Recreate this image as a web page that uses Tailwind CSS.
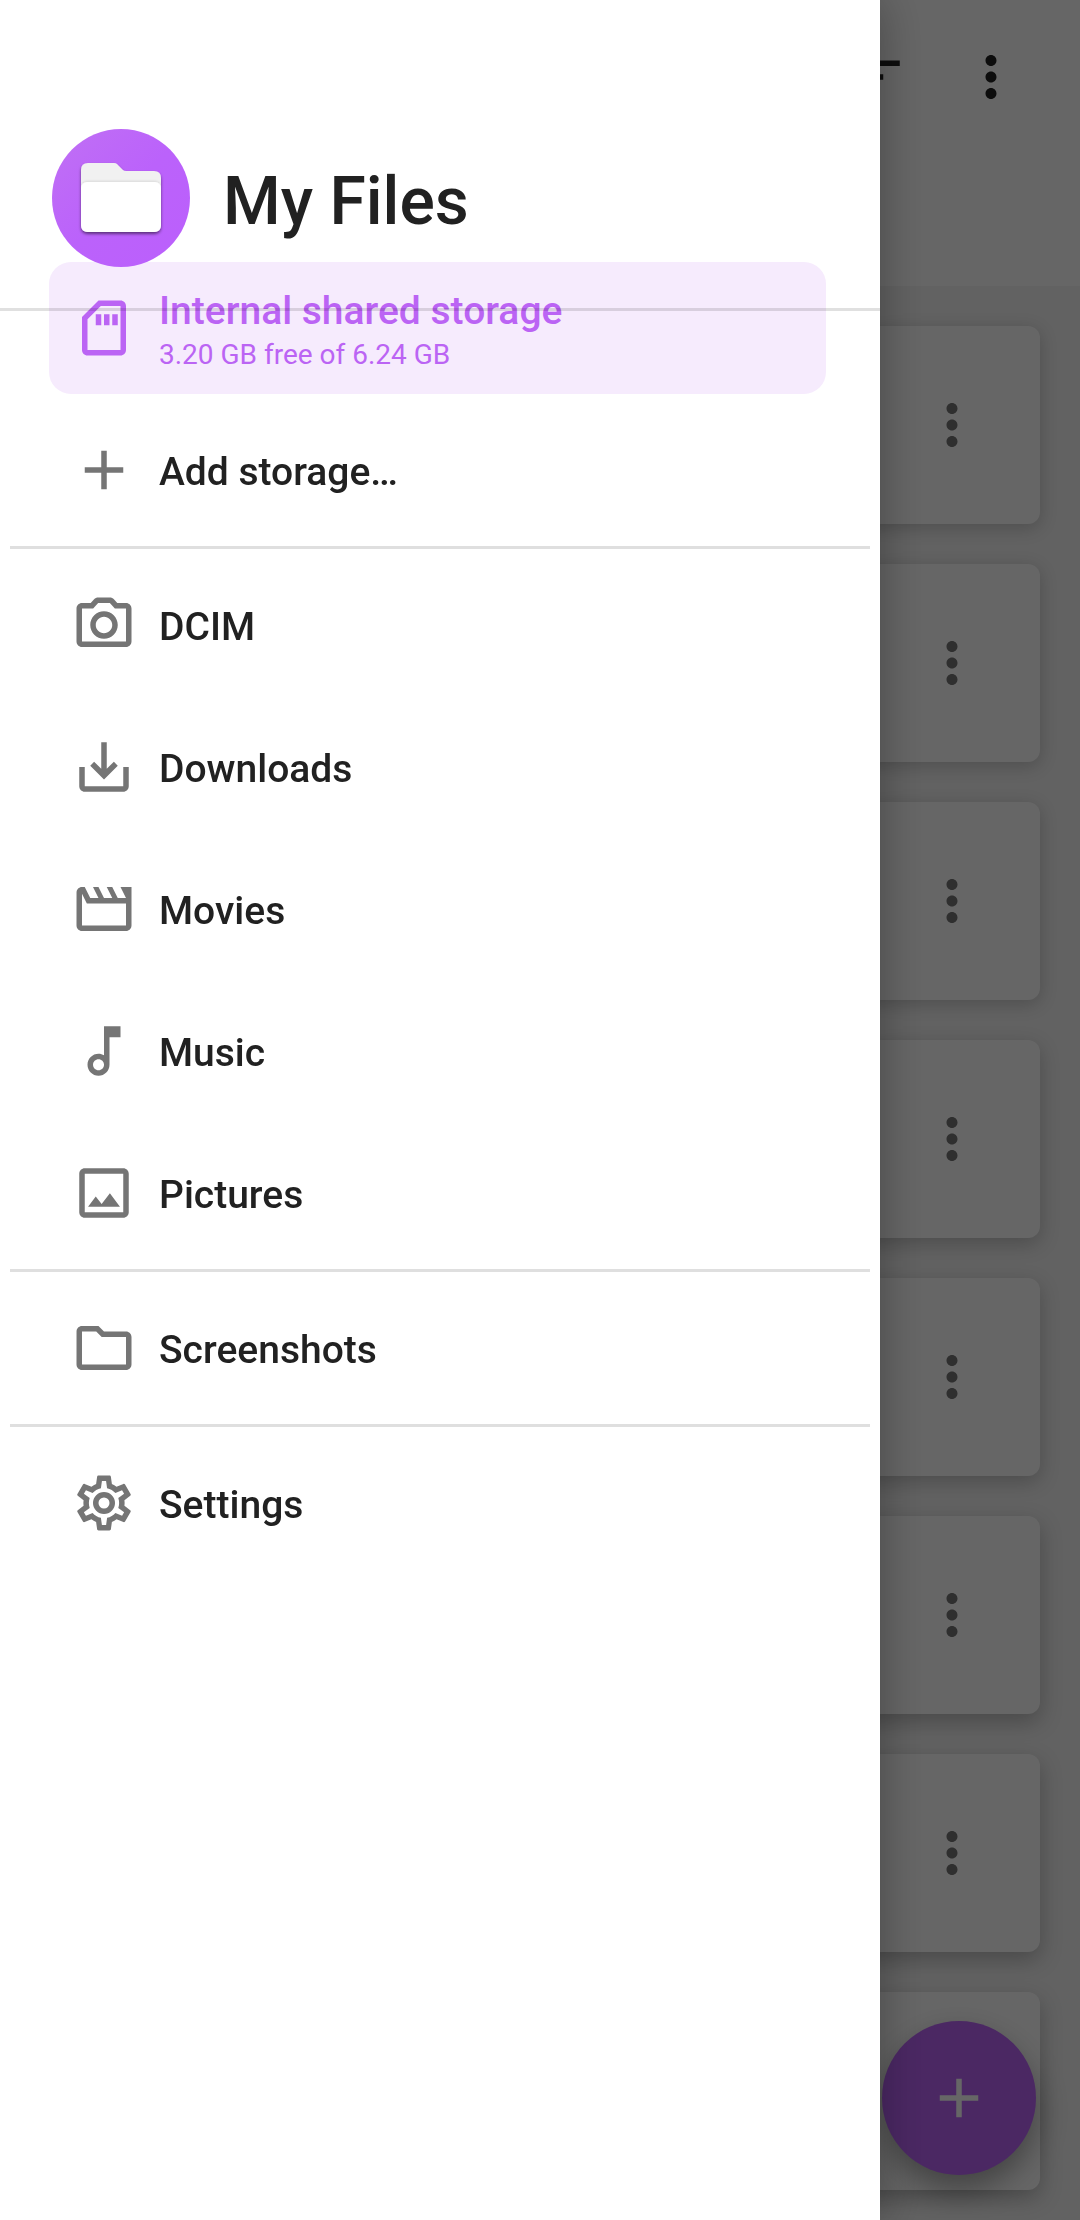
<!DOCTYPE html>
<html lang="en">
<head>
<meta charset="utf-8">
<meta name="viewport" content="width=device-width, initial-scale=1">
<title>My Files</title>
<script src="https://cdn.jsdelivr.net/npm/@tailwindcss/browser@4"></script>
</head>
<body class="min-h-screen overflow-x-hidden bg-[#f4f4f4] font-['Roboto',sans-serif] text-[#212121]">

<svg class="hidden" aria-hidden="true">
  <symbol id="more" viewBox="0 0 24 24"><path d="M12 8c1.1 0 2-.9 2-2s-.9-2-2-2-2 .9-2 2 .9 2 2 2zm0 2c-1.1 0-2 .9-2 2s.9 2 2 2 2-.9 2-2-.9-2-2-2zm0 6c-1.1 0-2 .9-2 2s.9 2 2 2 2-.9 2-2-.9-2-2-2z"/></symbol>
  <symbol id="plus" viewBox="0 0 24 24"><path d="M19 13h-6v6h-2v-6H5v-2h6V5h2v6h6v2z"/></symbol>
</svg>

<!-- File list behind the drawer -->
<header class="flex h-[286px] items-start justify-end gap-[50px] bg-white pt-11 pr-14">
  <button aria-label="Sort" class="size-[66px]"><svg viewBox="0 0 24 24" class="size-full fill-[#212121]"><path d="M3 18h6v-2H3v2zM3 6v2h18V6H3zm0 7h12v-2H3v2z"/></svg></button>
  <button aria-label="More options" class="size-[66px]"><svg class="size-full fill-[#212121]"><use href="#more"/></svg></button>
</header>
<main class="flex flex-col gap-10 px-10 pt-10 pb-[30px]">
  <article class="flex h-[198px] items-center justify-end rounded-xl bg-white pr-[55px] shadow-[0_4px_18px_rgb(0_0_0/0.2)]"><button aria-label="File options" class="size-[66px]"><svg class="size-full fill-[#757575]"><use href="#more"/></svg></button></article>
  <article class="flex h-[198px] items-center justify-end rounded-xl bg-white pr-[55px] shadow-[0_4px_18px_rgb(0_0_0/0.2)]"><button aria-label="File options" class="size-[66px]"><svg class="size-full fill-[#757575]"><use href="#more"/></svg></button></article>
  <article class="flex h-[198px] items-center justify-end rounded-xl bg-white pr-[55px] shadow-[0_4px_18px_rgb(0_0_0/0.2)]"><button aria-label="File options" class="size-[66px]"><svg class="size-full fill-[#757575]"><use href="#more"/></svg></button></article>
  <article class="flex h-[198px] items-center justify-end rounded-xl bg-white pr-[55px] shadow-[0_6px_20px_rgb(0_0_0/0.22)]"><button aria-label="File options" class="size-[66px]"><svg class="size-full fill-[#757575]"><use href="#more"/></svg></button></article>
  <article class="flex h-[198px] items-center justify-end rounded-xl bg-white pr-[55px] shadow-[0_6px_20px_rgb(0_0_0/0.22)]"><button aria-label="File options" class="size-[66px]"><svg class="size-full fill-[#757575]"><use href="#more"/></svg></button></article>
  <article class="flex h-[198px] items-center justify-end rounded-xl bg-white pr-[55px] shadow-[0_8px_22px_rgb(0_0_0/0.25)]"><button aria-label="File options" class="size-[66px]"><svg class="size-full fill-[#757575]"><use href="#more"/></svg></button></article>
  <article class="flex h-[198px] items-center justify-end rounded-xl bg-white pr-[55px] shadow-[0_8px_22px_rgb(0_0_0/0.25)]"><button aria-label="File options" class="size-[66px]"><svg class="size-full fill-[#757575]"><use href="#more"/></svg></button></article>
  <article class="flex h-[198px] items-center justify-end rounded-xl bg-white pr-[55px] shadow-[0_8px_22px_rgb(0_0_0/0.25)]"></article>
</main>
<button aria-label="Add" class="fixed right-11 bottom-[45px] flex size-[154px] items-center justify-center rounded-full bg-[#bb64f8] shadow-[0_14px_30px_rgb(0_0_0/0.35)]"><svg class="size-[66px] fill-white"><use href="#plus"/></svg></button>

<div class="fixed inset-0 bg-black/60"></div>

<!-- Navigation drawer -->
<aside class="fixed inset-y-0 left-0 w-[calc(100%-200px)] bg-white shadow-[0_0_44px_rgb(0_0_0/0.32)]">
  <div class="pointer-events-none relative z-10 flex h-[311px] items-start gap-[33px] border-b-3 border-black/12 pt-[129px] pl-[52px]">
    <svg viewBox="0 0 138 138" class="size-[138px] shrink-0" aria-hidden="true">
      <defs>
        <linearGradient id="disc" x1="0" y1="0" x2="1" y2="1"><stop offset="0" stop-color="#c070f4"/><stop offset=".5" stop-color="#bb62fb"/><stop offset="1" stop-color="#bb5ffc"/></linearGradient>
        <filter id="lift" x="-20%" y="-20%" width="140%" height="150%"><feDropShadow dx="0" dy="2" stdDeviation="1.6" flood-color="#000" flood-opacity=".5"/></filter>
        <filter id="edge" x="-10%" y="-20%" width="120%" height="140%"><feDropShadow dx="0" dy="-1" stdDeviation="1" flood-color="#000" flood-opacity=".1"/></filter>
        <clipPath id="folder"><path d="M36 34h26q2 0 3 1l6 6q1 1 3 1h28q7 0 7 7v47q0 7-7 7H36q-7 0-7-7V41q0-7 7-7z"/></clipPath>
      </defs>
      <circle cx="69" cy="69" r="69" fill="url(#disc)"/>
      <path d="M36 34h26q2 0 3 1l6 6q1 1 3 1h28q7 0 7 7v47q0 7-7 7H36q-7 0-7-7V41q0-7 7-7z" fill="#f1f1f1" filter="url(#lift)"/>
      <g clip-path="url(#folder)"><rect x="29" y="53" width="80" height="50" rx="6" fill="#fff" filter="url(#edge)"/></g>
    </svg>
    <h1 class="pt-[33px] text-[66px] leading-[80px] font-medium">My Files</h1>
  </div>

  <nav class="-mt-[54px] text-[39px] leading-[44px] font-medium">
    <ul>
      <li class="py-[5px] pr-[54px] pl-[49px]">
        <a href="#" aria-current="page" class="flex h-[132px] items-center gap-[22px] rounded-[22px] bg-[#f6ebfd] pl-[22px] text-[#bb64f4]">
          <svg viewBox="0 0 24 24" class="size-[66px] fill-current"><path d="M18 2h-8L4 8v12c0 1.1.9 2 2 2h12c1.1 0 2-.9 2-2V4c0-1.1-.9-2-2-2zm0 18H6V8.83L10.83 4H18v16zM9 7h2v4H9V7zm3 0h2v4h-2V7zm3 0h2v4h-2V7z"/></svg>
          <span class="flex flex-col pt-2.5"><span>Internal shared storage</span><span class="text-[28px] font-normal">3.20 GB free of 6.24 GB</span></span>
        </a>
      </li>
      <li class="py-[5px] pr-[54px] pl-[49px]">
        <a href="#" class="flex h-[132px] items-center gap-[22px] pl-[22px]">
          <svg class="size-[66px] fill-[#757575]"><use href="#plus"/></svg>
          <span class="pt-1">Add storage…</span>
        </a>
      </li>
    </ul>
    <hr class="mx-2.5 my-[5px] border-t-3 border-[#dfdfdf]">
    <ul>
      <li class="py-[5px] pr-[54px] pl-[49px]">
        <a href="#" class="flex h-[132px] items-center gap-[22px] pl-[22px]">
          <svg viewBox="0 0 24 24" class="size-[66px] fill-[#757575]"><path d="M20 4h-3.17L15.6 2.65C15.22 2.24 14.68 2 14.12 2H9.88c-.56 0-1.1.24-1.48.65L7.17 4H4c-1.1 0-2 .9-2 2v12c0 1.1.9 2 2 2h16c1.1 0 2-.9 2-2V6c0-1.1-.9-2-2-2zm0 14H4V6h4.05l1.83-2h4.24l1.83 2H20v12zM12 7c-2.76 0-5 2.24-5 5s2.24 5 5 5 5-2.24 5-5-2.24-5-5-5zm0 8c-1.65 0-3-1.35-3-3s1.35-3 3-3 3 1.35 3 3-1.35 3-3 3z"/></svg>
          <span class="pt-1">DCIM</span>
        </a>
      </li>
      <li class="py-[5px] pr-[54px] pl-[49px]">
        <a href="#" class="flex h-[132px] items-center gap-[22px] pl-[22px]">
          <svg viewBox="0 0 24 24" class="size-[66px] fill-[#757575]"><path d="M19 12v7H5v-7H3v7c0 1.1.9 2 2 2h14c1.1 0 2-.9 2-2v-7h-2zm-6 .67l2.59-2.58L17 11.5l-5 5-5-5 1.41-1.41L11 12.67V3h2v9.67z"/></svg>
          <span class="pt-1">Downloads</span>
        </a>
      </li>
      <li class="py-[5px] pr-[54px] pl-[49px]">
        <a href="#" class="flex h-[132px] items-center gap-[22px] pl-[22px]">
          <svg viewBox="0 0 24 24" class="size-[66px] fill-[#757575]"><path d="M18 4l2 4h-3l-2-4h-2l2 4h-3l-2-4H8l2 4H7L5 4H4c-1.1 0-1.99.9-1.99 2L2 18c0 1.1.9 2 2 2h16c1.1 0 2-.9 2-2V4h-4zm2 14H4V6.47L5.76 10H20v8z"/></svg>
          <span class="pt-1">Movies</span>
        </a>
      </li>
      <li class="py-[5px] pr-[54px] pl-[49px]">
        <a href="#" class="flex h-[132px] items-center gap-[22px] pl-[22px]">
          <svg viewBox="0 0 24 24" class="size-[66px] fill-[#757575]"><path d="M12 3l.01 10.55c-.59-.34-1.27-.55-2-.55C7.79 13 6 14.79 6 17s1.79 4 4.01 4S14 19.21 14 17V7h4V3h-6zm-1.99 16c-1.1 0-2-.9-2-2s.9-2 2-2 2 .9 2 2-.9 2-2 2z"/></svg>
          <span class="pt-1">Music</span>
        </a>
      </li>
      <li class="py-[5px] pr-[54px] pl-[49px]">
        <a href="#" class="flex h-[132px] items-center gap-[22px] pl-[22px]">
          <svg viewBox="0 0 24 24" class="size-[66px] fill-[#757575]"><path d="M19 5v14H5V5h14m0-2H5c-1.1 0-2 .9-2 2v14c0 1.1.9 2 2 2h14c1.1 0 2-.9 2-2V5c0-1.1-.9-2-2-2z"/><path d="M14.14 12.1l-3 3.87L9 13.3 6.2 17h11.6z"/></svg>
          <span class="pt-1">Pictures</span>
        </a>
      </li>
    </ul>
    <hr class="mx-2.5 my-[5px] border-t-3 border-[#dfdfdf]">
    <ul>
      <li class="py-[5px] pr-[54px] pl-[49px]">
        <a href="#" class="flex h-[132px] items-center gap-[22px] pl-[22px]">
          <svg viewBox="0 0 24 24" class="size-[66px] fill-[#757575]"><path d="M9.17 6l2 2H20v10H4V6h5.17M10 4H4c-1.1 0-1.99.9-1.99 2L2 18c0 1.1.9 2 2 2h16c1.1 0 2-.9 2-2V8c0-1.1-.9-2-2-2h-8l-2-2z"/></svg>
          <span class="pt-1">Screenshots</span>
        </a>
      </li>
    </ul>
    <hr class="mx-2.5 my-[5px] border-t-3 border-[#dfdfdf]">
    <ul>
      <li class="py-[5px] pr-[54px] pl-[49px]">
        <a href="#" class="flex h-[132px] items-center gap-[22px] pl-[22px]">
          <svg viewBox="0 0 24 24" class="size-[66px] fill-[#757575]"><path d="M12,8A4,4 0 0,1 16,12A4,4 0 0,1 12,16A4,4 0 0,1 8,12A4,4 0 0,1 12,8M12,10A2,2 0 0,0 10,12A2,2 0 0,0 12,14A2,2 0 0,0 14,12A2,2 0 0,0 12,10M10,22C9.75,22 9.54,21.82 9.5,21.58L9.13,18.93C8.5,18.68 7.96,18.34 7.44,17.94L4.95,18.95C4.73,19.03 4.46,18.95 4.34,18.73L2.34,15.27C2.21,15.05 2.27,14.78 2.46,14.63L4.57,12.97L4.5,12L4.57,11L2.46,9.37C2.27,9.22 2.21,8.95 2.34,8.73L4.34,5.27C4.46,5.05 4.73,4.96 4.95,5.05L7.44,6.05C7.96,5.66 8.5,5.32 9.13,5.07L9.5,2.42C9.54,2.18 9.75,2 10,2H14C14.25,2 14.46,2.18 14.5,2.42L14.87,5.07C15.5,5.32 16.04,5.66 16.56,6.05L19.05,5.05C19.27,4.96 19.54,5.05 19.66,5.27L21.66,8.73C21.79,8.95 21.73,9.22 21.54,9.37L19.43,11L19.5,12L19.43,13L21.54,14.63C21.73,14.78 21.79,15.05 21.66,15.27L19.66,18.73C19.54,18.95 19.27,19.04 19.05,18.95L16.56,17.95C16.04,18.34 15.5,18.68 14.87,18.93L14.5,21.58C14.46,21.82 14.25,22 14,22H10M11.25,4L10.88,6.61C9.68,6.86 8.62,7.5 7.85,8.39L5.44,7.35L4.69,8.65L6.8,10.2C6.4,11.37 6.4,12.64 6.8,13.8L4.68,15.36L5.43,16.66L7.86,15.62C8.63,16.5 9.68,17.14 10.87,17.38L11.24,20H12.76L13.13,17.39C14.32,17.14 15.37,16.5 16.14,15.62L18.57,16.66L19.32,15.36L17.2,13.81C17.6,12.64 17.6,11.37 17.2,10.2L19.31,8.65L18.56,7.35L16.15,8.39C15.38,7.5 14.32,6.86 13.12,6.62L12.75,4H11.25Z"/></svg>
          <span class="pt-1">Settings</span>
        </a>
      </li>
    </ul>
  </nav>
</aside>
</body>
</html>
